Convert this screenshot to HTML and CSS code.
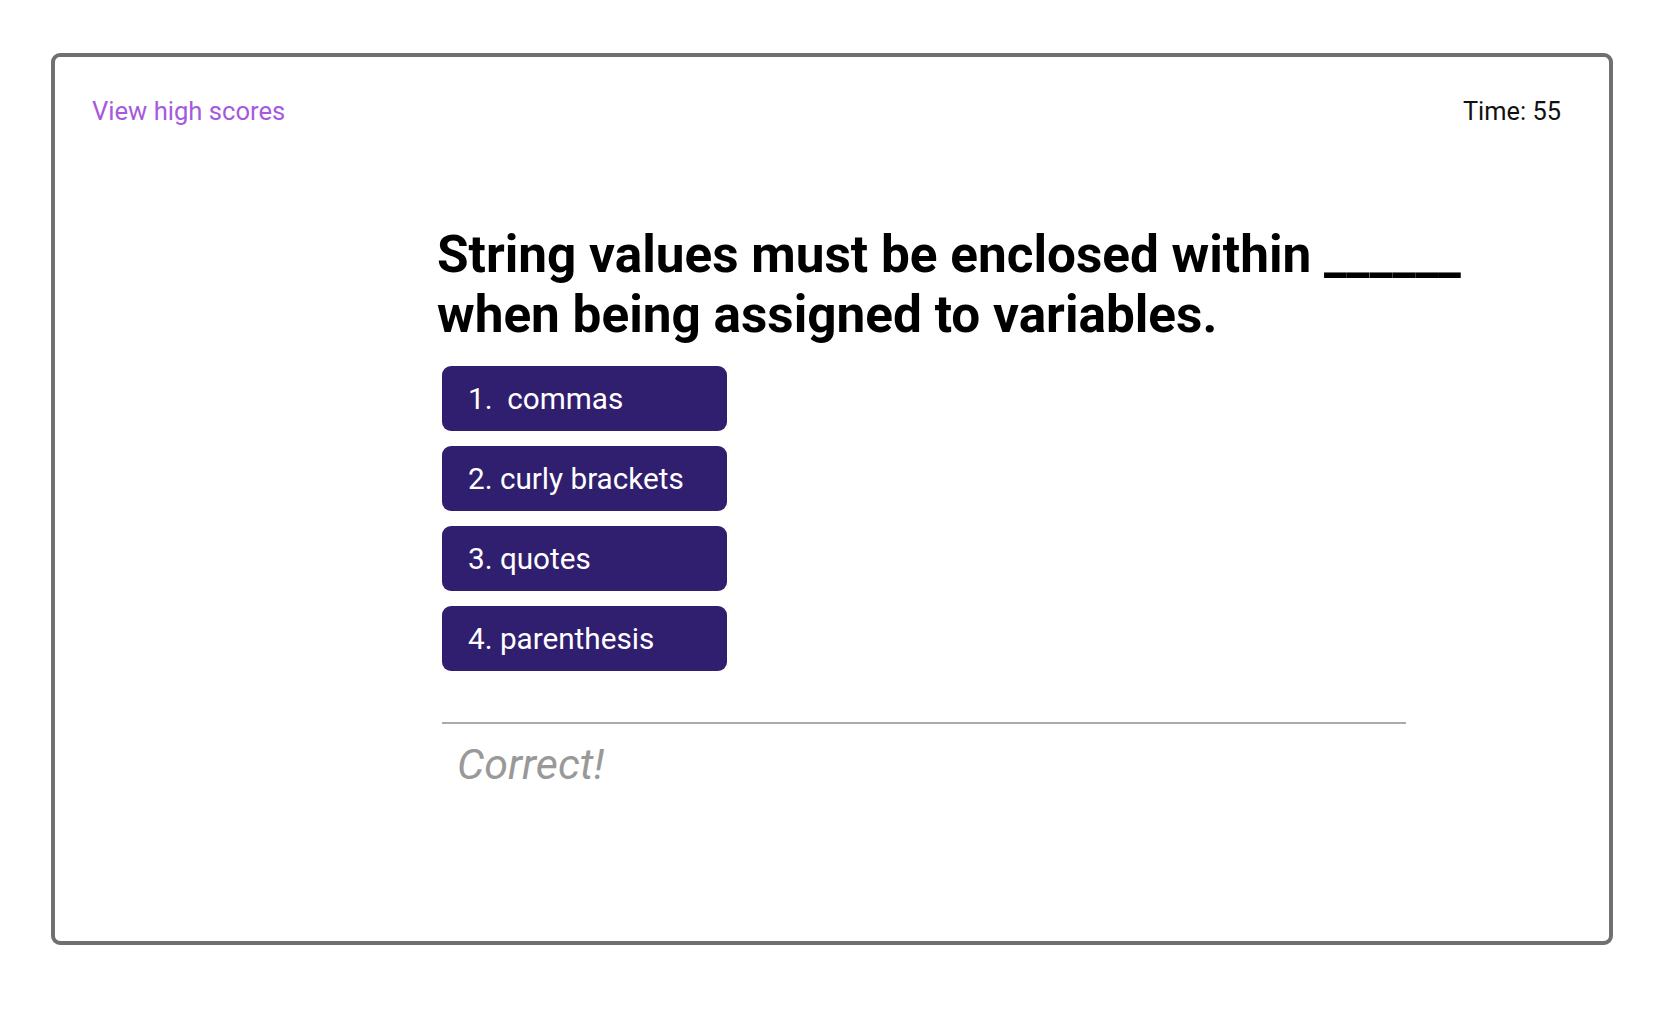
FILE: index.html
```html
<!DOCTYPE html>
<html lang="en">
<head>
<meta charset="utf-8">
<title>Code Quiz</title>
<link rel="stylesheet" href="styles.css">
</head>
<body>
<div class="frame">
  <header class="topbar">
    <a class="scores-link" href="#">View high scores</a>
    <div class="timer">Time: 55</div>
  </header>
  <main class="quiz">
    <h1 class="question">String values must be enclosed within ______ when being assigned to variables.</h1>
    <div class="choices">
      <button class="choice">1.&nbsp; commas</button>
      <button class="choice">2. curly brackets</button>
      <button class="choice">3. quotes</button>
      <button class="choice">4. parenthesis</button>
    </div>
    <div class="feedback">
      <p class="result">Correct!</p>
    </div>
  </main>
</div>
</body>
</html>
```
FILE: styles.css
```css
html, body {
  margin: 0;
  padding: 0;
  background: #ffffff;
}

body {
  font-family: Roboto, "Liberation Sans", sans-serif;
  color: #000;
}

.frame {
  box-sizing: border-box;
  width: 1562px;
  height: 892px;
  margin: 53px 0 0 51px;
  border: 4px solid #707070;
  border-radius: 9px;
  background: #fff;
}

.topbar {
  display: flex;
  justify-content: space-between;
  align-items: flex-start;
  padding: 39px 48px 0 37px;
  line-height: 30px;
}

.scores-link {
  font-size: 25.6px;
  color: #a659e0;
  text-decoration: none;
}

.timer {
  font-size: 25.4px;
  color: #111;
}

.quiz {
  padding: 99px 0 0 382px;
  width: 1120px;
}

.question {
  margin: 0;
  font-size: 51.3px;
  font-weight: 700;
  line-height: 60px;
  color: #000;
}

.choices {
  display: flex;
  flex-direction: column;
  align-items: flex-start;
  gap: 15px;
  margin: 21px 0 0 5px;
}

.choice {
  box-sizing: border-box;
  width: 285px;
  height: 65px;
  padding: 0 0 0 26px;
  border: none;
  border-radius: 9px;
  background: #301e6e;
  color: #fff;
  font-family: Roboto, "Liberation Sans", sans-serif;
  font-size: 29.7px;
  text-align: left;
  cursor: pointer;
}

.feedback {
  margin: 51px 0 0 5px;
  width: 964px;
  border-top: 2px solid #aaaaaa;
}

.result {
  margin: 15px 0 0 15px;
  font-size: 43px;
  font-style: italic;
  color: #999999;
}
```
